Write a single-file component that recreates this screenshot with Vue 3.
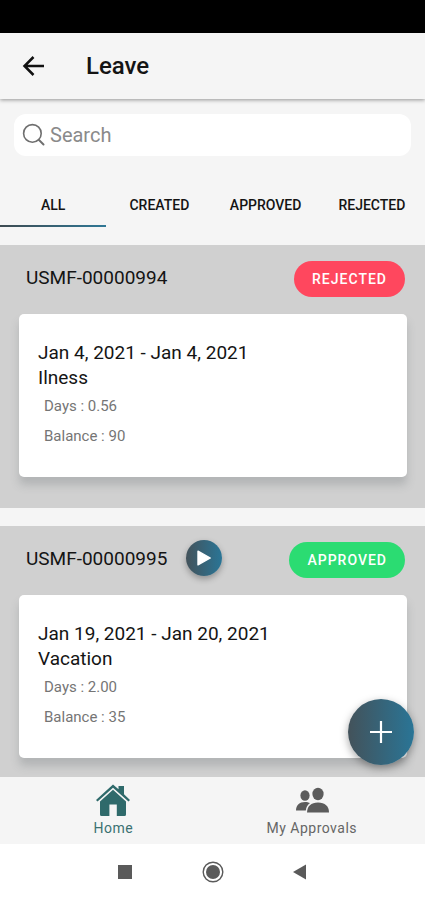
<script setup>
import { ref } from 'vue'

const tabs = ['ALL', 'CREATED', 'APPROVED', 'REJECTED']
const activeTab = ref('ALL')
const query = ref('')

const requests = [
  {
    id: 'USMF-00000994',
    status: 'REJECTED',
    dates: 'Jan 4, 2021 - Jan 4, 2021',
    type: 'Ilness',
    days: '0.56',
    balance: '90',
    playable: false,
  },
  {
    id: 'USMF-00000995',
    status: 'APPROVED',
    dates: 'Jan 19, 2021 - Jan 20, 2021',
    type: 'Vacation',
    days: '2.00',
    balance: '35',
    playable: true,
  },
]
</script>

<template>
  <div class="screen">
    <div class="status-bar"></div>

    <header class="app-bar">
      <button class="icon-button" type="button" aria-label="Back">
        <svg width="24" height="24" viewBox="0 0 24 24" fill="none" stroke="#111" stroke-width="2.5">
          <path d="M22 12H3M11.500 3L2.500 12l9 9" />
        </svg>
      </button>
      <h1 class="title">Leave</h1>
    </header>

    <div class="search-area">
      <label class="search">
        <svg width="24" height="24" viewBox="0 0 24 24" fill="none" stroke="#6f6f6f" stroke-width="1.6" stroke-linecap="round">
          <circle cx="10.4" cy="10.4" r="8.8" />
          <path d="M17 17l4.500 4.500" stroke-width="2" />
        </svg>
        <input v-model="query" type="text" placeholder="Search" aria-label="Search" />
      </label>
    </div>

    <div class="tabs" role="tablist">
      <button
        v-for="tab in tabs"
        :key="tab"
        class="tab"
        :class="{ active: tab === activeTab }"
        type="button"
        role="tab"
        :aria-selected="tab === activeTab"
        @click="activeTab = tab"
      >
        {{ tab }}
      </button>
    </div>

    <main class="content">
      <div class="list">
        <section v-for="item in requests" :key="item.id" class="request">
          <div class="request-head">
            <div class="request-name">
              <h2 class="request-id">{{ item.id }}</h2>
              <button v-if="item.playable" class="play" type="button" aria-label="Submit">
                <svg width="16" height="18" viewBox="0 0 16 18">
                  <path d="M2 2.2L14.3 9 2 15.8z" fill="#fff" stroke="#fff" stroke-width="1.4" stroke-linejoin="round" />
                </svg>
              </button>
            </div>
            <button class="badge" :class="item.status.toLowerCase()" type="button">{{ item.status }}</button>
          </div>
          <article class="card">
            <p class="line">{{ item.dates }}</p>
            <p class="line">{{ item.type }}</p>
            <div class="details">
              <p class="detail">Days : {{ item.days }}</p>
              <p class="detail">Balance : {{ item.balance }}</p>
            </div>
          </article>
        </section>
      </div>
      <button class="fab" type="button" aria-label="Add">
        <svg width="24" height="24" viewBox="0 0 24 24" fill="none" stroke="#fff" stroke-width="2.2">
          <path d="M12 1v22M1 12h22" />
        </svg>
      </button>
    </main>

    <nav class="bottom-nav">
      <a class="nav-item current" href="#home">
        <svg width="34" height="34" viewBox="0 0 34 34" fill="#2f6a6b">
          <path d="M17 1.500l5.500 4.800V3H28v8.200l6 5.800-1.500 1.600L17 4.800 1.500 18.600 0 17z" />
          <path d="M17 6.800L30 18.600V31.500q0 1.500-1.500 1.500h-7.700V21.600h-7.400V33H5.500q-1.500 0-1.500-1.500V18.600z" />
        </svg>
        <span>Home</span>
      </a>
      <a class="nav-item" href="#approvals">
        <svg width="34" height="34" viewBox="0 0 34 34" fill="#5c5c5c">
          <ellipse cx="10" cy="12.500" rx="4.600" ry="5.300" />
          <ellipse cx="23" cy="11" rx="5.600" ry="6.200" />
          <path d="M1 27.500c0-5.300 3.500-8.600 9-8.600 2 0 3.600.4 5 1.200-2.500 1.800-3.900 4.300-4.200 7.400z" />
          <path d="M12 29.500c.2-6.300 4-10 11-10s11 3.700 11 10z" />
        </svg>
        <span>My Approvals</span>
      </a>
    </nav>

    <div class="system-nav">
      <button class="icon-button" type="button" aria-label="Recent apps">
        <svg width="22" height="22" viewBox="0 0 22 22"><path d="M4 4h14v14H4z" fill="#5a5a5a" /></svg>
      </button>
      <button class="icon-button" type="button" aria-label="Home screen">
        <svg width="22" height="22" viewBox="0 0 22 22">
          <circle cx="11" cy="11" r="9.8" fill="none" stroke="#5a5a5a" stroke-width="1.4" />
          <circle cx="11" cy="11" r="7" fill="#5a5a5a" />
        </svg>
      </button>
      <button class="icon-button" type="button" aria-label="System back">
        <svg width="22" height="22" viewBox="0 0 22 22"><path d="M16 3.500v15L3 11z" fill="#5a5a5a" /></svg>
      </button>
    </div>
  </div>
</template>

<style>
body {
  margin: 0;
  background: #fff;
}
</style>

<style scoped>
.screen {
  display: flex;
  flex-direction: column;
  height: 100vh;
  background: #f5f5f5;
  color: #141414;
  font-family: Roboto, "Liberation Sans", sans-serif;
}

button {
  padding: 0;
  border: 0;
  background: none;
  color: inherit;
  font: inherit;
  cursor: pointer;
}

svg {
  display: block;
}

.status-bar {
  height: 33px;
  background: #000;
}

.app-bar {
  display: flex;
  align-items: center;
  gap: 40px;
  height: 66px;
  padding: 0 22px;
  box-shadow: 0 1px 4px rgba(0, 0, 0, 0.4);
}

.title {
  margin: 0;
  font-size: 24px;
  font-weight: 500;
  line-height: 32px;
}

.search-area {
  padding: 15px 14px 0;
}

.search {
  display: flex;
  align-items: center;
  gap: 4px;
  height: 42px;
  padding: 0 8px;
  border-radius: 12px;
  background: #fff;
}

.search input {
  flex: 1;
  min-width: 0;
  padding: 0;
  border: 0;
  outline: 0;
  background: none;
  font: inherit;
  font-size: 20px;
}

.search input::placeholder {
  color: #8a8a8a;
  opacity: 1;
}

.tabs {
  display: grid;
  grid-template-columns: repeat(4, 1fr);
  padding: 26px 0 18px;
}

.tab {
  height: 45px;
  padding-top: 2px;
  border-bottom: 2px solid transparent;
  font-size: 14px;
  font-weight: 500;
}

.tab.active {
  border-image: linear-gradient(90deg, #3e4a50, #2f7896) 1;
}

.content {
  position: relative;
  flex: 1;
  min-height: 0;
}

.list {
  display: flex;
  flex-direction: column;
  gap: 18px;
  height: 100%;
  overflow-y: auto;
  scrollbar-width: none;
}

.request {
  flex: none;
  padding: 14px 18px 31px 19px;
  background: #d0d0d0;
}

.request-head {
  display: flex;
  align-items: flex-end;
  justify-content: space-between;
  height: 38px;
  margin-bottom: 17px;
  padding: 0 2px 0 7px;
}

.request-name {
  display: flex;
  align-items: center;
  align-self: flex-start;
  gap: 19px;
  height: 36px;
}

.request-id {
  margin: 0;
  font-size: 19px;
  font-weight: 400;
}

.play {
  display: flex;
  align-items: center;
  justify-content: center;
  width: 36px;
  height: 36px;
  border-radius: 50%;
  background: linear-gradient(90deg, #43525a, #2a7596);
  box-shadow: 0 3px 6px rgba(0, 0, 0, 0.3);
}

.badge {
  height: 36px;
  padding: 0 18px;
  border-radius: 18px;
  color: #fff;
  font-size: 14px;
  font-weight: 500;
  letter-spacing: 1px;
}

.badge.rejected {
  background: #ff475e;
}

.badge.approved {
  background: #2bdc72;
}

.card {
  padding: 26px 19px;
  border-radius: 5px;
  background: #fff;
  box-shadow: 0 8px 8px rgba(90, 100, 105, 0.25);
}

.line {
  margin: 0;
  font-size: 19px;
  line-height: 25px;
}

.details {
  padding: 1px 6px 0;
}

.detail {
  margin: 0;
  color: #757575;
  font-size: 15px;
  line-height: 30px;
}

.fab {
  position: absolute;
  right: 11px;
  bottom: 12px;
  display: flex;
  align-items: center;
  justify-content: center;
  width: 66px;
  height: 66px;
  border-radius: 50%;
  background: linear-gradient(90deg, #43525a, #2a7596);
  box-shadow: 0 3px 8px rgba(0, 0, 0, 0.35);
}

.bottom-nav {
  display: grid;
  grid-template-columns: 1fr 1fr;
  height: 67px;
  padding: 0 14px;
}

.nav-item {
  display: flex;
  flex-direction: column;
  align-items: center;
  padding-top: 6px;
  color: #666;
  font-size: 14px;
  line-height: 22px;
  letter-spacing: 0.5px;
  text-decoration: none;
}

.nav-item.current {
  color: #3b7172;
}

.system-nav {
  display: flex;
  justify-content: center;
  gap: 66px;
  height: 56px;
  background: #fff;
}
</style>
